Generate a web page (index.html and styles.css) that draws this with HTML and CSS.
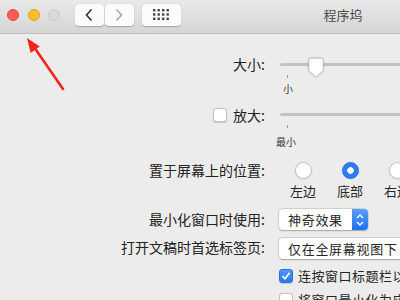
FILE: index.html
```html
<!DOCTYPE html>
<html lang="zh">
<head>
<meta charset="UTF-8">
<title>程序坞</title>
<link rel="stylesheet" href="styles.css">
</head>
<body>
<div class="window">
    <!-- title bar -->
    <div class="titlebar">
        <div class="tb-left">
            <span class="light red"></span>
            <span class="light yellow"></span>
            <span class="light off"></span>
            <div class="nav">
                <span class="nav-btn">
                    <svg width="10" height="14" viewBox="0 0 10 14"><path d="M7.5 1.5 L2.5 7 L7.5 12.5" fill="none" stroke="#333" stroke-width="1.6"/></svg>
                </span>
                <span class="nav-btn">
                    <svg width="10" height="14" viewBox="0 0 10 14"><path d="M2.5 1.5 L7.5 7 L2.5 12.5" fill="none" stroke="#a8a8a8" stroke-width="1.6"/></svg>
                </span>
            </div>
            <span class="nav-btn grid-btn">
                <svg width="16" height="11" viewBox="0 0 16 11" fill="#444">
                    <rect x="0" y="0" width="2.4" height="2.4"/><rect x="4.5" y="0" width="2.4" height="2.4"/><rect x="9" y="0" width="2.4" height="2.4"/><rect x="13.5" y="0" width="2.4" height="2.4"/>
                    <rect x="0" y="4.3" width="2.4" height="2.4"/><rect x="4.5" y="4.3" width="2.4" height="2.4"/><rect x="9" y="4.3" width="2.4" height="2.4"/><rect x="13.5" y="4.3" width="2.4" height="2.4"/>
                    <rect x="0" y="8.6" width="2.4" height="2.4"/><rect x="4.5" y="8.6" width="2.4" height="2.4"/><rect x="9" y="8.6" width="2.4" height="2.4"/><rect x="13.5" y="8.6" width="2.4" height="2.4"/>
                </svg>
            </span>
        </div>
        <div class="title">程序坞</div>
        <div></div>
    </div>

    <!-- preferences -->
    <div class="form">
        <div class="label row-size">大小:</div>
        <div class="slider row-size">
            <div class="slider-bar">
                <div class="track"></div>
                <svg class="thumb" width="16" height="20" viewBox="0 0 16 20">
                    <path d="M2.5 0.5 H13.5 A1.5 1.5 0 0 1 15 2 V12.5 L8 19 L1 12.5 V2 A1.5 1.5 0 0 1 2.5 0.5 Z" fill="#fff" stroke="#c4c4c4" stroke-width="0.7"/>
                </svg>
            </div>
            <div class="tick"></div>
            <div class="tick-label small">小</div>
        </div>

        <div class="label check-label row-mag">
            <span class="checkbox"></span>
            <span>放大:</span>
        </div>
        <div class="slider row-mag">
            <div class="slider-bar">
                <div class="track"></div>
            </div>
            <div class="tick"></div>
            <div class="tick-label wide">最小</div>
        </div>

        <div class="label row-pos">置于屏幕上的位置:</div>
        <div class="radios row-pos">
            <div class="radio-item"><span class="radio"></span><span>左边</span></div>
            <div class="radio-item"><span class="radio on"></span><span>底部</span></div>
            <div class="radio-item"><span class="radio"></span><span>右边</span></div>
        </div>

        <div class="label row-min">最小化窗口时使用:</div>
        <div class="row-min">
            <div class="popup short">
                <span class="popup-text">神奇效果</span>
                <span class="stepper">
                    <svg width="8" height="14" viewBox="0 0 8 14"><path d="M1 5 L4 2 L7 5 M1 9 L4 12 L7 9" fill="none" stroke="#fff" stroke-width="1.4"/></svg>
                </span>
            </div>
        </div>

        <div class="label row-tab">打开文稿时首选标签页:</div>
        <div class="row-tab">
            <div class="popup long">
                <span class="popup-text">仅在全屏幕视图下</span>
            </div>
        </div>

        <div class="row-dbl">
            <label class="check"><span class="checkbox checked">
                <svg width="10" height="10" viewBox="0 0 10 10"><path d="M1.5 5.2 L4 7.8 L8.6 1.8" fill="none" stroke="#fff" stroke-width="1.7"/></svg>
            </span>连按窗口标题栏以缩放窗口</label>
        </div>
        <div class="row-app">
            <label class="check"><span class="checkbox"></span>将窗口最小化为应用程序图标</label>
        </div>
    </div>
</div>

<!-- annotation arrow -->
<svg class="annot" width="80" height="100" viewBox="0 0 80 100">
    <path d="M63 89 L34 47" stroke="#f0261b" stroke-width="2.6" stroke-linecap="round"/>
    <polygon points="27,38 30.6,53 39.8,46.4" fill="#f0261b"/>
</svg>
</body>
</html>
```
FILE: styles.css
```css
body {
    margin: 0;
    width: 400px;
    height: 300px;
    overflow: hidden;
    background: #ececec;
    font-family: "Noto Sans CJK SC", "Noto Sans", sans-serif;
    font-size: 13px;
    color: #262626;
    position: relative;
}

.window {
    width: 686px;
}

/* title bar */
.titlebar {
    display: grid;
    grid-template-columns: 1fr auto 1fr;
    align-items: center;
    height: 33px;
    background: linear-gradient(#e9e9e9, #d5d5d5);
    border-bottom: 1px solid #bdbdbd;
}

.tb-left {
    display: flex;
    align-items: center;
    padding-left: 7px;
    margin-top: -4px;
}

.light {
    width: 12px;
    height: 12px;
    border-radius: 50%;
    margin-right: 8.5px;
    box-sizing: border-box;
}

.red { background: #fd5d56; border: 0.5px solid #e2463f; }
.yellow { background: #fdbc2f; border: 0.5px solid #dea123; }
.off { background: #d9d9d9; border: 1px solid #cbcbcb; }

.nav {
    display: flex;
    gap: 1px;
    margin-left: 6px;
}

.nav-btn {
    display: flex;
    justify-content: center;
    align-items: center;
    width: 29px;
    height: 22px;
    background: #fbfbfb;
    border-radius: 4px;
    box-shadow: 0 0.5px 1px rgba(0, 0, 0, 0.25);
}

.grid-btn {
    width: 39px;
    margin-left: 8px;
}

.title {
    color: #4b4b4b;
    font-size: 13px;
    margin-top: -5px;
}

/* form */
.form {
    display: grid;
    grid-template-columns: 265px 1fr;
    column-gap: 14px;
    align-items: start;
}

.label {
    text-align: right;
    font-size: 14px;
    line-height: 13px;
    white-space: nowrap;
    color: #222;
}

.row-size { margin-top: 24px; }

.row-mag { margin-top: 13px; }

.check-label {
    display: flex;
    justify-content: flex-end;
    align-items: center;
    gap: 6px;
    height: 14px;
}

.slider {
    margin-left: 1px;
}

.slider-bar {
    position: relative;
    height: 17px;
}

.track {
    position: absolute;
    top: 5px;
    left: 0;
    right: 0;
    height: 3px;
    border-radius: 2px;
    background: #c2c2c2;
}

.thumb {
    position: absolute;
    left: 28px;
    top: 0;
    filter: drop-shadow(0 0.5px 0.8px rgba(0, 0, 0, 0.3));
}

.tick {
    width: 1px;
    height: 3px;
    margin-left: 7px;
    background: #9a9a9a;
}

.tick-label {
    margin-top: 5px;
    font-size: 10px;
    line-height: 12px;
    color: #333;
}

.tick-label.small { margin-left: 3px; }
.tick-label.wide { margin-left: -4px; margin-top: 8px; }

/* radios */
.row-pos { margin-top: 14px; }
.row-pos.label { margin-top: 16px; }

.radios {
    display: flex;
    gap: 21px;
    margin-left: 11px;
}

.radio-item {
    display: flex;
    flex-direction: column;
    align-items: center;
    gap: 5px;
    line-height: 13px;
}

.radio {
    width: 17px;
    height: 17px;
    border-radius: 50%;
    background: #fff;
    box-sizing: border-box;
    border: 0.5px solid #c3c3c3;
    box-shadow: 0 0.5px 1px rgba(0, 0, 0, 0.15);
}

.radio.on {
    background: radial-gradient(circle, #fff 0 3px, #2f7cf6 3.5px);
    border-color: #2a6fe0;
}

/* popups */
.row-min { margin-top: 12px; }
.row-min.label { margin-top: 16px; }

.row-tab { margin-top: 8px; }
.row-tab.label { margin-top: 11px; }

.popup {
    display: flex;
    align-items: center;
    height: 21px;
    background: #fff;
    border-radius: 4px;
    box-shadow: 0 0 0 0.5px rgba(0, 0, 0, 0.15), 0 0.5px 1.5px rgba(0, 0, 0, 0.25);
}

.popup.short { width: 89px; }
.popup.long { width: 200px; }

.popup-text {
    flex: 1;
    padding-left: 9px;
    letter-spacing: 0.7px;
    line-height: 21px;
}

.stepper {
    display: flex;
    justify-content: center;
    align-items: center;
    width: 16px;
    height: 21px;
    border-radius: 0 4px 4px 0;
    background: linear-gradient(#58a0fb, #1d6ff1);
}

/* checkboxes */
.row-dbl { grid-column: 2; margin-top: 10px; }
.row-app { grid-column: 2; margin-top: 10px; }

.check {
    display: flex;
    align-items: center;
    gap: 5px;
    line-height: 14px;
    white-space: nowrap;
    letter-spacing: 0.5px;
}

.checkbox {
    display: flex;
    justify-content: center;
    align-items: center;
    flex: none;
    width: 14px;
    height: 14px;
    border-radius: 3px;
    background: #fff;
    box-sizing: border-box;
    border: 0.5px solid #c3c3c3;
    box-shadow: 0 0.5px 1px rgba(0, 0, 0, 0.15);
}

.checkbox.checked {
    background: linear-gradient(#4d97fa, #2a78f3);
    border-color: #2a6fe0;
}

/* annotation */
.annot {
    position: absolute;
    left: 0;
    top: 0;
}
```
